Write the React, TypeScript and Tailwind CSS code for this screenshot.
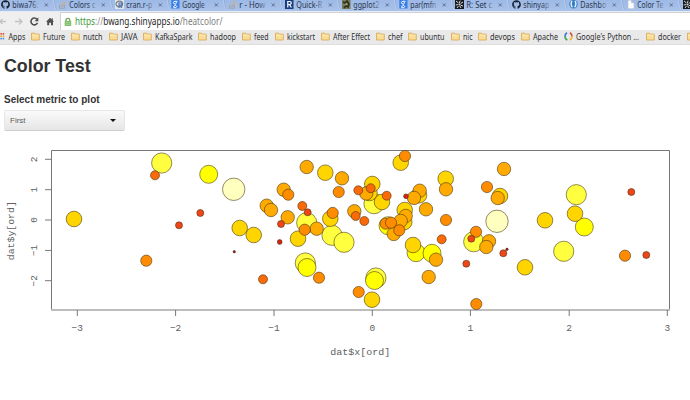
import React from "react";
import { FaGithub } from "react-icons/fa";

const UI = "font-['Noto_Sans','Open_Sans',sans-serif]";

type TabIcon = "github" | "stack" | "cran" | "google" | "quickr" | "ggplot" | "dark" | "joyent" | "page";

const tabs: { icon: TabIcon; label: string }[] = [
  { icon: "github", label: "biwa76:" },
  { icon: "stack", label: "Colors c" },
  { icon: "cran", label: "cran.r-p" },
  { icon: "google", label: "Google" },
  { icon: "stack", label: "r - How" },
  { icon: "quickr", label: "Quick-R" },
  { icon: "ggplot", label: "ggplot2" },
  { icon: "google", label: "par(mfn" },
  { icon: "dark", label: "R: Set c" },
  { icon: "github", label: "shinyap" },
  { icon: "joyent", label: "Dashbo" },
  { icon: "page", label: "Color Te" },
  { icon: "dark", label: "" },
];

const bookmarks: { label: string; slot: string; text: string; kind?: "apps" | "google" }[] = [
  { label: "Apps", slot: "w-[33px]", text: "17", kind: "apps" },
  { label: "Future", slot: "w-[40px]", text: "22" },
  { label: "nutch", slot: "w-[38px]", text: "19.5" },
  { label: "JAVA", slot: "w-[34px]", text: "16.5" },
  { label: "KafkaSpark", slot: "w-[55px]", text: "37.5" },
  { label: "hadoop", slot: "w-[44px]", text: "26" },
  { label: "feed", slot: "w-[33px]", text: "14.5" },
  { label: "kickstart", slot: "w-[46px]", text: "28" },
  { label: "After Effect", slot: "w-[55px]", text: "37" },
  { label: "chef", slot: "w-[32px]", text: "14.5" },
  { label: "ubuntu", slot: "w-[43px]", text: "24.5" },
  { label: "nic", slot: "w-[27px]", text: "9.5" },
  { label: "devops", slot: "w-[43px]", text: "25" },
  { label: "Apache", slot: "w-[43px]", text: "25" },
  { label: "Google's Python ...", slot: "w-[82px]", text: "63", kind: "google" },
  { label: "docker", slot: "w-[41px]", text: "23" },
  { label: "", slot: "w-[12px]", text: "0" },
];

function TabGlyph({ icon }: { icon: TabIcon }) {
  if (icon === "github") return <FaGithub className="size-[9px] text-[#14202e]" />;
  return (
    <svg className="size-[9px]" viewBox="0 0 9 9">
      {icon === "stack" && (
        <g fill="none" strokeWidth="1">
          <path d="M1.5 5v3.3h5V5" stroke="#9ba5b5" />
          <path d="M2.5 6.8h3M2.7 5l3 .6" stroke="#b3a99c" />
          <path d="M3.8 2.8l2.5 2M5.8 1l1.2 3" stroke="#dfa66e" />
        </g>
      )}
      {icon === "cran" && (
        <g>
          <rect width="9" height="9" fill="#dfe6f0" />
          <ellipse cx="4.3" cy="4" rx="3.3" ry="2.8" fill="none" stroke="#7b8088" strokeWidth="1.3" />
          <path d="M4 8V3h1.8q1.5 0 1.2 1.5L5 5.3 7 8" fill="none" stroke="#5276aa" strokeWidth="1.1" />
        </g>
      )}
      {icon === "google" && (
        <g>
          <rect x=".3" width="8.2" height="8.6" rx=".6" fill="#397fea" />
          <path d="M6.5 1.3H4q-1.7.1-1.6 1.4.1 1.3 1.8 1.2M5 1.4q1 1.7-.5 2.7-.8.8.4 1.3 1.4.8.4 1.9-1.2 1-2.7.1-.9-1.4 2-1.9" fill="none" stroke="#eef5ff" strokeWidth="1" />
        </g>
      )}
      {icon === "quickr" && (
        <g>
          <rect width="8.5" height="9" fill="#173d80" />
          <path d="M2.8 7.5v-6h1.8q1.8.1 1.6 1.6-.2 1.4-1.8 1.4h-1M4.5 4.7L6.4 7.5" fill="none" stroke="#fff" strokeWidth="1.2" />
        </g>
      )}
      {icon === "ggplot" && (
        <g>
          <rect width="8.5" height="9" fill="#777a50" />
          <path d="M1 2l2 1 2-2 2 3-1 3-2-1-2 2" stroke="#292e25" strokeWidth="1.5" fill="none" />
          <path d="M3 4l2 .5" stroke="#b7b778" />
        </g>
      )}
      {icon === "dark" && (
        <g>
          <rect width="9" height="9" fill="#171a1e" />
          <path d="M1 1l2.5 2M5 .7L4.5 3M8 2L5.7 3.5M8 6L5.7 5.2M6 8L4.8 6M2 8l1.5-2M.7 5L3 4.6" stroke="#eee" strokeWidth=".9" />
          <circle cx="4.5" cy="4.5" r="1" fill="#ddd" />
        </g>
      )}
      {icon === "joyent" && (
        <g>
          <circle cx="4.5" cy="4.3" r="4.2" fill="#367fc5" />
          <path d="M3 1.2q-2 3 .4 6M6 1.2q2 3-.4 6" fill="none" stroke="#e3f2ff" strokeWidth="1.4" />
        </g>
      )}
      {icon === "page" && (
        <path d="M2 .2h3.5L8 2.7v6H2zM5.5.2v2.5H8" fill="#fafcff" stroke="#b6becb" strokeWidth=".6" />
      )}
    </svg>
  );
}

function TabStrip() {
  return (
    <div className="flex h-[11px] shrink-0 overflow-hidden bg-gradient-to-b from-[#9db9e5] to-[#a9c2ea] pl-px">
      {tabs.map((t, i) => (
        <div key={i} className="flex h-full w-[56.8px] shrink-0 items-start">
          <div className="w-[11px] shrink-0"><TabGlyph icon={t.icon} /></div>
          <svg className="h-[11px] w-[27px] shrink-0 overflow-visible" viewBox="0 0 27 11">
            <defs>
              <linearGradient id={`fade${i}`} gradientUnits="userSpaceOnUse" x1="0" x2="27" y1="0" y2="0">
                <stop offset=".7" stopColor="#26344d" />
                <stop offset="1" stopColor="#26344d" stopOpacity=".2" />
              </linearGradient>
            </defs>
            {t.label && (
              <text x=".3" y="7.8" textLength={i === 3 ? 22.5 : 26} lengthAdjust="spacingAndGlyphs" className={`${UI} text-[8px]`} fill={`url(#fade${i})`}>
                {t.label}
              </text>
            )}
          </svg>
          <svg className="h-[11px] w-[18px] shrink-0" viewBox="0 0 18 11">
            <path d="M5.8 3.4l3 3m0-3l-3 3" stroke="#55647f" strokeWidth=".9" />
            <path d="M14.5 0q.3 7 3.2 10.5" fill="none" stroke="#c7d7f1" strokeWidth=".8" />
            <path d="M15.2 0q.3 7 3.2 10.5" fill="none" stroke="#829cc8" strokeWidth=".5" />
          </svg>
        </div>
      ))}
    </div>
  );
}

function AddressBar() {
  return (
    <div className="flex h-[18px] shrink-0 bg-[#efefef]">
      <svg className="h-[18px] w-[60px] shrink-0" viewBox="0 0 60 18" fill="none">
        <path d="M6 9.5H0M2.5 7L0 9.5 2.5 12M15 9.5h7M19 6.5l3 3-3 3" stroke="#c3c3c3" strokeWidth="1.3" />
        <path d="M37 7.3a3.4 3.4 0 1 0 .5 3.5" stroke="#505050" strokeWidth="1.6" />
        <path d="M38.4 5.3v3.9h-3.9z" fill="#505050" />
        <path d="M46 9.7L50 5.8l1.8 1.7V6.3h1v2.2L54 9.7h-1v3.6h-2v-2.5h-1.8v2.5h-2V9.7z" fill="#505050" />
      </svg>
      <div className="flex grow items-center border-l border-t border-[#d2d2d2] bg-white">
        <svg className="ml-[3px] h-[10px] w-[8px] shrink-0" viewBox="0 0 8 10">
          <path d="M2 5V3q0-1.7 1.9-1.7T5.8 3v2" fill="none" stroke="#6cab5b" strokeWidth="1.3" />
          <rect x=".7" y="4" width="6.5" height="5" rx=".6" fill="#7cbb67" />
          <path d="M1.5 5.6h5M1.5 7.3h5" stroke="#c4e2b9" strokeWidth=".6" />
        </svg>
        <svg className="ml-[2.5px] h-[17px] w-[150px] shrink-0 overflow-visible" viewBox="0 0 150 17">
          <text x="0" y="12.2" textLength="147.5" lengthAdjust="spacingAndGlyphs" className={`${UI} text-[10.5px]`}>
            <tspan fill="#3d9b35">https</tspan>
            <tspan fill="#8b8b8b">://</tspan>
            <tspan fill="#252525">bwang.shinyapps.io</tspan>
            <tspan fill="#808080">/heatcolor/</tspan>
          </text>
        </svg>
      </div>
    </div>
  );
}

function BookmarkIcon({ kind }: { kind?: "apps" | "google" }) {
  if (kind === "apps")
    return (
      <svg className="size-[9px] shrink-0" viewBox="0 0 9 9">
        {["#d74d42", "#e3a341", "#438de0"].map((c, r) =>
          [0, 2.3, 4.6].map((x) => <rect key={`${r}${x}`} x={x} y={1 + r * 2.4} width="1.6" height="1.6" fill={c} />)
        )}
      </svg>
    );
  if (kind === "google")
    return (
      <svg className="size-[9px] shrink-0" viewBox="0 0 9 9" fill="none" strokeWidth="1.7">
        <path d="M3 .8Q1 2 1 4.4" stroke="#3979df" />
        <path d="M1 4.2Q1 7 3.3 8.1" stroke="#3ba557" />
        <path d="M5.9.8Q8 2 8 4.4" stroke="#da5141" />
        <path d="M8 4.2Q8 7 5.8 8.1" stroke="#e7b632" />
      </svg>
    );
  return (
    <svg className="size-[9px] shrink-0" viewBox="0 0 9 9">
      <path d="M.5 8V1.2h3.3l.8 1h3.7V8z" fill="#f9dc96" stroke="#d9a64f" strokeWidth=".8" />
      <path d="M1.2 3.3h6.5" stroke="#fff0bd" strokeWidth=".8" />
    </svg>
  );
}

function BookmarksBar() {
  return (
    <div className="flex h-[15px] shrink-0 items-center overflow-hidden border-b border-[#dedede] bg-[#e9e9e9] pb-px">
      <div className="-ml-[2px] flex items-center">
        {bookmarks.map((b, i) => (
          <div key={i} className={`flex shrink-0 items-center ${b.slot}`}>
            <BookmarkIcon kind={b.kind} />
            {b.label && (
              <svg className="ml-[2.5px] h-[13px] w-0 grow overflow-visible">
                <text x={b.kind === "apps" ? -1.5 : 0} y="9.6" textLength={b.text} lengthAdjust="spacingAndGlyphs" fill="#303030" className={`${UI} text-[8px]`}>
                  {b.label}
                </text>
              </svg>
            )}
          </div>
        ))}
      </div>
    </div>
  );
}

// Radius, fill and centre points per size class, drawn largest first.
const classes: { r: number; fill: string; pts: [number, number][] }[] = [
  { r: 11.2, fill: "#ffffc0", pts: [[233.7, 189.3], [497, 221.3]] },
  {
    r: 10.1, fill: "#ffff40",
    pts: [[161.7, 163], [306.7, 222.7], [332, 235.3], [344, 242.3], [305.3, 263], [374, 203.7], [473.7, 241.7], [576.3, 194.7], [563.7, 251.3], [375.9, 278]],
  },
  { r: 9, fill: "#ffff00", pts: [[208.7, 174.3], [307, 267.5], [388, 225.7], [416, 252.7], [432, 253.3], [584.3, 227], [374.5, 280.5]] },
  {
    r: 7.8, fill: "#ffd500",
    pts: [[74, 219], [325.3, 172.7], [239.7, 228], [253.7, 235], [298, 238.7], [330.3, 218.7], [369.5, 193], [372.3, 184], [382, 202], [419, 195.3], [400.7, 162.7], [445.7, 178.7], [404.3, 222], [404.7, 210], [413, 245], [500, 196], [575, 213.7], [545, 220.3], [525, 267.3], [372, 299.7]],
  },
  {
    r: 6.7, fill: "#ffaa00",
    pts: [[306.7, 167], [342, 178.3], [283.7, 189.7], [266.7, 205.7], [271, 210], [287.7, 217.3], [316.7, 228.7], [354.3, 211.3], [366.3, 193.5], [419.7, 190.7], [414, 197.9], [446, 189.3], [426, 209.3], [405.7, 215.9], [400.7, 220.9], [393.7, 234], [436, 259.7], [504, 169], [497.7, 198], [489, 241.3], [486.3, 247], [428.7, 277]],
  },
  {
    r: 5.6, fill: "#ff8c00",
    pts: [[146.3, 260.7], [338.7, 192], [288.3, 194.7], [304.7, 229.7], [332.7, 212.9], [405, 156], [385.7, 223.7], [391, 222.7], [399.3, 230.3], [446, 220], [487, 187], [476, 231.8], [625, 255.7], [319, 277.7], [358.7, 292], [476.3, 304]],
  },
  { r: 4.5, fill: "#fb6a08", pts: [[155, 175.3], [302.3, 206], [355.7, 216], [364.3, 221], [358.3, 190.3], [370.7, 188.2], [386.7, 195.7], [441.7, 239.3], [263, 279.3]] },
  { r: 3.5, fill: "#f04518", pts: [[200.3, 213], [179, 225.3], [307.7, 212.3], [281, 224], [471.3, 238.7], [503.3, 253.3], [466.3, 263.7], [631.3, 192], [646.3, 255]] },
  { r: 2.4, fill: "#d82318", pts: [[279.7, 242], [406, 196.3]] },
  { r: 1.2, fill: "#a00f20", pts: [[234.3, 251.7], [507, 249.3]] },
];

const xTicks: [number, string][] = [[77.3, "−3"], [175.6, "−2"], [274, "−1"], [372.3, "0"], [470.4, "1"], [569.2, "2"], [667.3, "3"]];
const yTicks: [number, string][] = [[159.3, "2"], [189.7, "1"], [220, "0"], [250.4, "−1"], [280.7, "−2"]];

function ScatterPlot() {
  return (
    <svg className="h-[256px] w-[690px] shrink-0 font-['Liberation_Mono',monospace] text-[9.5px]" viewBox="0 144 690 256">
      <g stroke="#777" strokeWidth="1" fill="none">
        <path d="M51.5 310V150.5H669.5V310" />
        <path d="M51 310H670" stroke="#bdbdbd" strokeWidth="2" />
        {xTicks.map(([x]) => <path key={x} d={`M${x} 310v6`} />)}
        {yTicks.map(([y]) => <path key={y} d={`M51 ${y}h-6`} />)}
      </g>
      {classes.map((c) =>
        c.pts.map(([x, y], i) => (
          <circle key={`${c.r}-${i}`} cx={x} cy={y} r={c.r} fill={c.fill} stroke="#40300c" strokeOpacity=".75" strokeWidth=".75" />
        ))
      )}
      <g fill="#606060" textAnchor="middle">
        {xTicks.map(([x, t]) => <text key={x} x={x} y="331.3">{t}</text>)}
        {yTicks.map(([y, t]) => <text key={y} transform={`translate(37 ${y}) rotate(-90)`}>{t}</text>)}
        <text x="360.3" y="355.2" textLength="60" lengthAdjust="spacingAndGlyphs">dat$x[ord]</text>
        <text transform="translate(13.7 230.7) rotate(-90)" textLength="59" lengthAdjust="spacingAndGlyphs">dat$y[ord]</text>
      </g>
    </svg>
  );
}

export default function App() {
  return (
    <div className="flex h-[400px] w-[690px] flex-col overflow-hidden bg-white font-['Liberation_Sans',Arial,sans-serif]">
      <TabStrip />
      <div className="h-px shrink-0 bg-[#e4ebf6]" />
      <AddressBar />
      <BookmarksBar />
      <div className="flex h-[99px] shrink-0 flex-col items-start pl-[4px] pt-[9px]">
        <h1 className="text-[17.8px] font-bold leading-[24px] text-[#333]">Color Test</h1>
        <label className="mt-[15px] text-[10px] font-bold leading-[14px] text-[#333]">Select metric to plot</label>
        <button className="mt-[3px] flex h-[21px] w-[121px] shrink-0 items-center justify-between rounded-[2px] border border-[#e6e6e6] border-b-[#cfcfcf] bg-gradient-to-b from-[#fafafa] to-[#e6e6e6] pl-[5px] pr-[8px] text-[8px] text-[#5c5c5c]">
          First
          <svg className="h-[3px] w-[6px]" viewBox="0 0 6 3"><path d="M0 0h6L3 3z" fill="#111" /></svg>
        </button>
      </div>
      <ScatterPlot />
    </div>
  );
}
